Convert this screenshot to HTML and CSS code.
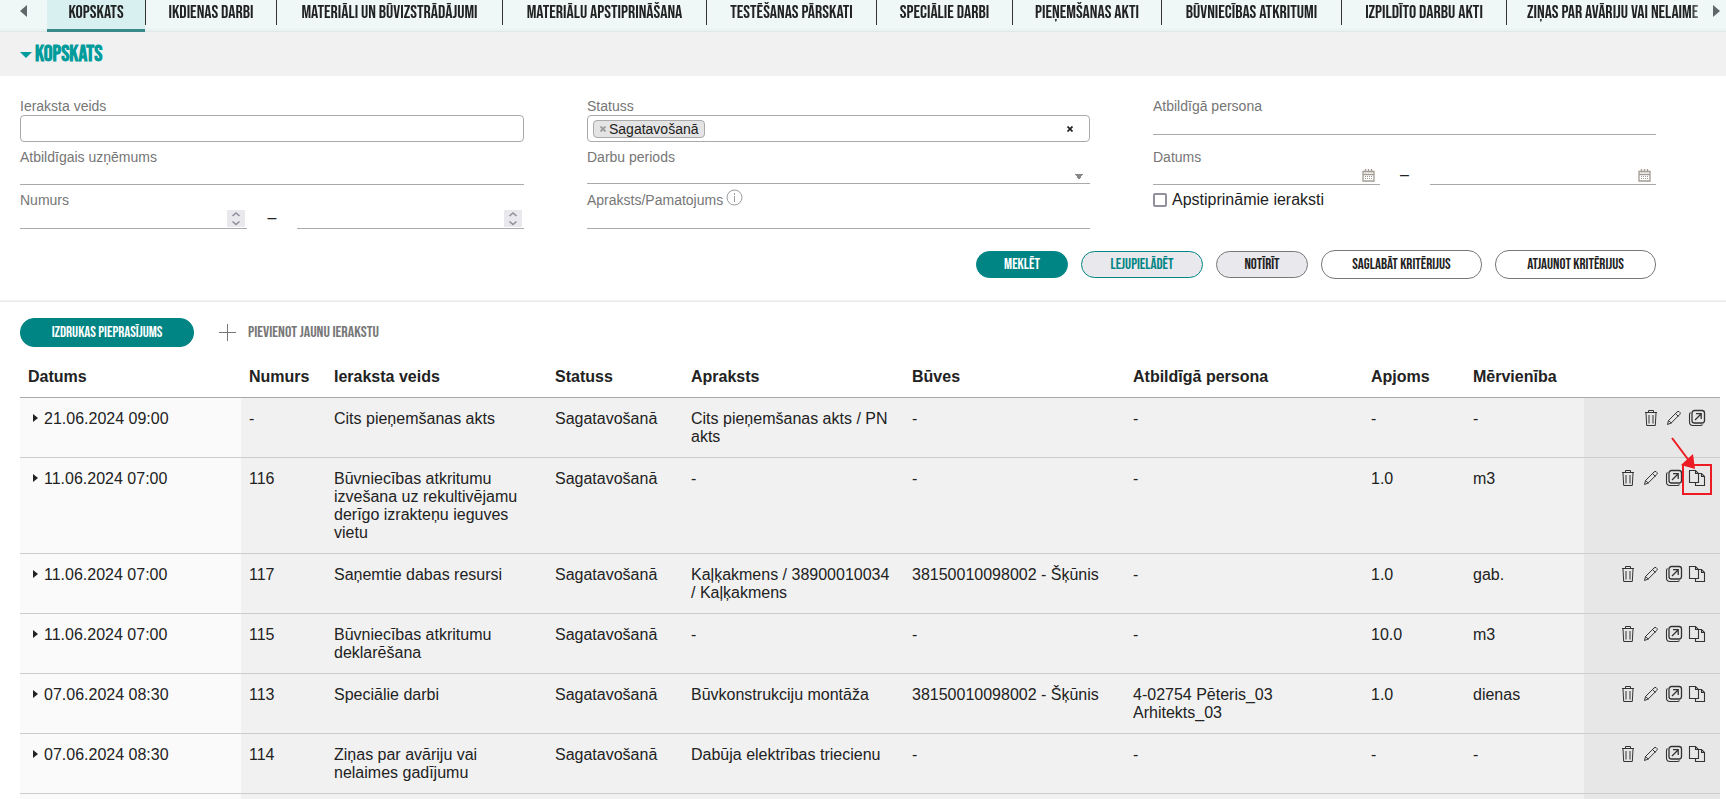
FILE: index.html
```html
<!DOCTYPE html>
<html lang="lv">
<head>
<meta charset="utf-8">
<title>Kopskats</title>
<link rel="stylesheet" href="styles.css">
</head>
<body>
<svg class="sprite" aria-hidden="true">
  <symbol id="trash" viewBox="0 0 18 18"><path d="M3 3.500h12M6.500 3V1.500h5V3M4 4l.7 12.500h8.600L14 4M7 6v8.500M11 6v8.500" fill="none" stroke="currentColor"/></symbol>
  <symbol id="pencil" viewBox="0 0 18 18"><path d="M2.500 15.500l1-4 8.500-8.500q1-1 2-.5l1 1q.7 1-.3 2l-8.500 8.500zM10.500 4.500l3 3M3.500 11.500l3 2.800" fill="none" stroke="currentColor"/></symbol>
  <symbol id="open" viewBox="0 0 18 18"><rect x="4" y="1.500" width="12.500" height="12.500" rx="2.500" fill="none" stroke="currentColor" stroke-width="1.300"/><path d="M2.500 3.500Q1.500 4 1.500 6v7q0 3.500 3.500 3.500h7q2 0 2.500-1" fill="none" stroke="currentColor" stroke-width="1.100"/><path d="M7 11l6-6M8 4.700h5.200V10" fill="none" stroke="currentColor" stroke-width="1.300"/></symbol>
  <symbol id="copy" viewBox="0 0 18 18"><path d="M7.500 13.500h-6v-12h6l3 3v9h-3M7.500 1.500v3h3M10.500 4.500h3l3 3v9h-9v-3M13.500 4.500v3h3" fill="none" stroke="currentColor" stroke-width="1.100"/></symbol>
  <symbol id="calendar" viewBox="0 0 13 13"><path d="M1 2.500h11v9.500H1zM1 5.500h11M3.500 0v3.500M6.500 0v3.500M9.500 0v3.500" fill="none" stroke="currentColor" stroke-width="1.300"/><path d="M3 7.500h7M3 9.500h7" stroke="currentColor" stroke-dasharray="1 1"/></symbol>
  <symbol id="spin" viewBox="0 0 18 17"><path d="M5.500 6L9 3l3.500 3M5.500 11.500l3.500 3 3.500-3" fill="none" stroke="currentColor" stroke-width="1.600"/></symbol>
  <symbol id="expand" viewBox="0 0 5 8"><path d="M0 0l5 4-5 4z" fill="currentColor"/></symbol>
  <symbol id="cross" viewBox="0 0 6 6"><path d="M.5.5l5 5M5.500.5l-5 5" stroke="currentColor" stroke-width="1.700"/></symbol>
</svg>

<nav class="tabs">
  <button class="tabs-arrow" aria-label="Iepriekšējie"><svg width="7" height="12" viewBox="0 0 7 12"><path d="M7 0v12L0 6z" fill="#5f6868"/></svg></button>
  <div class="tabs-list">
    <a class="tab tab-active" href="#">KOPSKATS</a>
    <a class="tab" href="#">IKDIENAS DARBI</a>
    <a class="tab" href="#">MATERIĀLI UN BŪVIZSTRĀDĀJUMI</a>
    <a class="tab" href="#">MATERIĀLU APSTIPRINĀŠANA</a>
    <a class="tab" href="#">TESTĒŠANAS PĀRSKATI</a>
    <a class="tab" href="#">SPECIĀLIE DARBI</a>
    <a class="tab" href="#">PIEŅEMŠANAS AKTI</a>
    <a class="tab" href="#">BŪVNIECĪBAS ATKRITUMI</a>
    <a class="tab" href="#">IZPILDĪTO DARBU AKTI</a>
    <a class="tab tab-last" href="#">ZIŅAS PAR AVĀRIJU VAI NELAIME</a>
  </div>
  <button class="tabs-arrow tabs-next" aria-label="Nākamie"><svg width="7" height="12" viewBox="0 0 7 12"><path d="M0 0v12l7-6z" fill="#5f6868"/></svg></button>
</nav>

<header class="title-bar">
  <svg width="12" height="6" viewBox="0 0 12 6"><path d="M0 0h12L6 6z" fill="#009b9b"/></svg>
  <h1 class="title">KOPSKATS</h1>
</header>

<form class="search">
  <div class="fields">
    <div class="field">
      <label class="label" for="type">Ieraksta veids</label>
      <input class="box" id="type" type="text">
    </div>
    <div class="field">
      <label class="label" for="status">Statuss</label>
      <div class="box multi">
        <span class="chip"><button type="button" class="plain chip-remove" aria-label="Noņemt"><svg width="6" height="6"><use href="#cross"/></svg></button>Sagatavošanā</span>
        <input class="multi-input" id="status" type="text">
        <button type="button" class="plain" aria-label="Notīrīt statusu"><svg width="6" height="6"><use href="#cross"/></svg></button>
      </div>
    </div>
    <div class="field">
      <label class="label" for="person">Atbildīgā persona</label>
      <input class="line tall" id="person" type="text">
    </div>
    <div class="field">
      <label class="label" for="company">Atbildīgais uzņēmums</label>
      <input class="line" id="company" type="text">
    </div>
    <div class="field">
      <label class="label" for="period">Darbu periods</label>
      <select class="line select" id="period"><option></option></select>
    </div>
    <div class="field">
      <label class="label" for="date-from">Datums</label>
      <div class="range">
        <div class="line with-icon"><input class="bare" id="date-from" type="text"><button type="button" class="plain cal" aria-label="Kalendārs"><svg width="13" height="13"><use href="#calendar"/></svg></button></div>
        <span class="dash">–</span>
        <div class="line with-icon"><input class="bare" type="text" aria-label="Datums līdz"><button type="button" class="plain cal" aria-label="Kalendārs"><svg width="13" height="13"><use href="#calendar"/></svg></button></div>
      </div>
    </div>
    <div class="field">
      <label class="label" for="num-from">Numurs</label>
      <div class="range">
        <div class="line with-icon tall"><input class="bare" id="num-from" type="number"><button type="button" class="plain spin" aria-label="Mainīt"><svg width="18" height="17"><use href="#spin"/></svg></button></div>
        <span class="dash">–</span>
        <div class="line with-icon tall"><input class="bare" type="number" aria-label="Numurs līdz"><button type="button" class="plain spin" aria-label="Mainīt"><svg width="18" height="17"><use href="#spin"/></svg></button></div>
      </div>
    </div>
    <div class="field">
      <label class="label" for="desc">Apraksts/Pamatojums <svg class="info" width="17" height="17" viewBox="0 0 17 17"><circle cx="8.500" cy="8.500" r="7.500" fill="none" stroke="#999"/><path d="M8.500 4v2M8.500 7v6" stroke="#999"/></svg></label>
      <input class="line tall" id="desc" type="text">
    </div>
    <div class="field">
      <label class="check"><input class="check-box" type="checkbox">Apstiprināmie ieraksti</label>
    </div>
  </div>
  <div class="actions">
    <button type="button" class="btn btn-primary btn-s">MEKLĒT</button>
    <button type="button" class="btn btn-teal btn-m">LEJUPIELĀDĒT</button>
    <button type="button" class="btn btn-grey btn-s">NOTĪRĪT</button>
    <button type="button" class="btn btn-l">SAGLABĀT KRITĒRIJUS</button>
    <button type="button" class="btn btn-l">ATJAUNOT KRITĒRIJUS</button>
  </div>
</form>

<main class="results">
  <div class="toolbar">
    <button class="btn btn-primary btn-print">IZDRUKAS PIEPRASĪJUMS</button>
    <button class="plain add"><svg width="17" height="17" viewBox="0 0 17 17"><path d="M8.500 0v17M0 8.500h17" stroke="#777"/></svg>PIEVIENOT JAUNU IERAKSTU</button>
  </div>
  <table class="grid">
    <colgroup><col class="w13"><col class="w5"><col class="w13"><col class="w8"><col class="w13"><col class="w13"><col class="w14"><col class="w6"><col class="w7"><col class="w8"></colgroup>
    <thead>
      <tr><th>Datums</th><th>Numurs</th><th>Ieraksta veids</th><th>Statuss</th><th>Apraksts</th><th>Būves</th><th>Atbildīgā persona</th><th>Apjoms</th><th>Mērvienība</th><th></th></tr>
    </thead>
    <tbody>
      <tr><td><svg class="expand" width="5" height="8"><use href="#expand"/></svg>21.06.2024 09:00</td><td>-</td><td>Cits pieņemšanas akts</td><td>Sagatavošanā</td><td>Cits pieņemšanas akts / PN akts</td><td>-</td><td>-</td><td>-</td><td>-</td>
        <td><div class="icons"><button class="plain" aria-label="Dzēst"><svg width="18" height="18"><use href="#trash"/></svg></button><button class="plain" aria-label="Labot"><svg width="18" height="18"><use href="#pencil"/></svg></button><button class="plain" aria-label="Atvērt"><svg width="18" height="18"><use href="#open"/></svg></button></div></td></tr>
      <tr><td><svg class="expand" width="5" height="8"><use href="#expand"/></svg>11.06.2024 07:00</td><td>116</td><td>Būvniecības atkritumu izvešana uz rekultivējamu derīgo izrakteņu ieguves vietu</td><td>Sagatavošanā</td><td>-</td><td>-</td><td>-</td><td>1.0</td><td>m3</td>
        <td><div class="icons"><button class="plain" aria-label="Dzēst"><svg width="18" height="18"><use href="#trash"/></svg></button><button class="plain" aria-label="Labot"><svg width="18" height="18"><use href="#pencil"/></svg></button><button class="plain" aria-label="Atvērt"><svg width="18" height="18"><use href="#open"/></svg></button><button class="plain marked" aria-label="Kopēt"><svg width="18" height="18"><use href="#copy"/></svg><svg class="marker" width="44" height="61" viewBox="0 0 44 61"><rect x="13" y="29" width="28" height="29" fill="none" stroke="#ed1c24" stroke-width="2"/><path d="M2 2l18 24" stroke="#ed1c24" stroke-width="2"/><path d="M23 18L11 29l14 4z" fill="#ed1c24"/></svg></button></div></td></tr>
      <tr><td><svg class="expand" width="5" height="8"><use href="#expand"/></svg>11.06.2024 07:00</td><td>117</td><td>Saņemtie dabas resursi</td><td>Sagatavošanā</td><td>Kaļķakmens / 38900010034 / Kaļķakmens</td><td>38150010098002 - Šķūnis</td><td>-</td><td>1.0</td><td>gab.</td>
        <td><div class="icons"><button class="plain" aria-label="Dzēst"><svg width="18" height="18"><use href="#trash"/></svg></button><button class="plain" aria-label="Labot"><svg width="18" height="18"><use href="#pencil"/></svg></button><button class="plain" aria-label="Atvērt"><svg width="18" height="18"><use href="#open"/></svg></button><button class="plain" aria-label="Kopēt"><svg width="18" height="18"><use href="#copy"/></svg></button></div></td></tr>
      <tr><td><svg class="expand" width="5" height="8"><use href="#expand"/></svg>11.06.2024 07:00</td><td>115</td><td>Būvniecības atkritumu deklarēšana</td><td>Sagatavošanā</td><td>-</td><td>-</td><td>-</td><td>10.0</td><td>m3</td>
        <td><div class="icons"><button class="plain" aria-label="Dzēst"><svg width="18" height="18"><use href="#trash"/></svg></button><button class="plain" aria-label="Labot"><svg width="18" height="18"><use href="#pencil"/></svg></button><button class="plain" aria-label="Atvērt"><svg width="18" height="18"><use href="#open"/></svg></button><button class="plain" aria-label="Kopēt"><svg width="18" height="18"><use href="#copy"/></svg></button></div></td></tr>
      <tr><td><svg class="expand" width="5" height="8"><use href="#expand"/></svg>07.06.2024 08:30</td><td>113</td><td>Speciālie darbi</td><td>Sagatavošanā</td><td>Būvkonstrukciju montāža</td><td>38150010098002 - Šķūnis</td><td>4-02754 Pēteris_03 Arhitekts_03</td><td>1.0</td><td>dienas</td>
        <td><div class="icons"><button class="plain" aria-label="Dzēst"><svg width="18" height="18"><use href="#trash"/></svg></button><button class="plain" aria-label="Labot"><svg width="18" height="18"><use href="#pencil"/></svg></button><button class="plain" aria-label="Atvērt"><svg width="18" height="18"><use href="#open"/></svg></button><button class="plain" aria-label="Kopēt"><svg width="18" height="18"><use href="#copy"/></svg></button></div></td></tr>
      <tr><td><svg class="expand" width="5" height="8"><use href="#expand"/></svg>07.06.2024 08:30</td><td>114</td><td>Ziņas par avāriju vai nelaimes gadījumu</td><td>Sagatavošanā</td><td>Dabūja elektrības triecienu</td><td>-</td><td>-</td><td>-</td><td>-</td>
        <td><div class="icons"><button class="plain" aria-label="Dzēst"><svg width="18" height="18"><use href="#trash"/></svg></button><button class="plain" aria-label="Labot"><svg width="18" height="18"><use href="#pencil"/></svg></button><button class="plain" aria-label="Atvērt"><svg width="18" height="18"><use href="#open"/></svg></button><button class="plain" aria-label="Kopēt"><svg width="18" height="18"><use href="#copy"/></svg></button></div></td></tr>
      <tr><td></td><td></td><td></td><td></td><td></td><td></td><td></td><td></td><td></td><td></td></tr>
    </tbody>
  </table>
</main>
</body>
</html>
```
FILE: styles.css
```css
* { box-sizing: border-box; }
html { height: 100%; overflow: hidden; }
body {
  margin: 0;
  font: 16px/18px "Liberation Sans", Arial, sans-serif;
  color: #222;
  background: #fff;
}
svg { display: block; flex: none; }
.sprite { position: absolute; width: 0; height: 0; }
button, input, select { font: inherit; color: inherit; }
.plain { display: flex; align-items: center; padding: 0; border: 0; background: none; }

/* Tabs */
.tabs {
  display: flex;
  height: 32px;
  background: linear-gradient(#eff7f7 27px, #e8f0f0 31px, #d8e0e0);
}
.tabs-arrow {
  display: flex;
  flex: none;
  width: 47px;
  padding: 5px 0 0 20px;
  border: 0;
  background: none;
}
.tabs-next { width: 16px; padding-left: 3px; }
.tabs-list {
  display: grid;
  flex: 1;
  grid-template-columns: 98px 132px 226px 204px 170px 136px 149px 180px 165px 1fr;
  overflow: hidden;
  -webkit-mask-image: linear-gradient(to left, transparent, #000 20px);
  mask-image: linear-gradient(to left, transparent, #000 20px);
}
.tab {
  height: 25px;
  padding-top: 3px;
  border-right: 1px solid #333;
  font: 18px/20px "Bebas Neue", "Liberation Sans Narrow", "Liberation Sans", sans-serif;
  text-align: center;
  text-decoration: none;
  white-space: nowrap;
  color: #222;
}
.tab-active { height: 32px; border-right: 0; border-bottom: 3px solid #37898a; background: #d8f0f0; }
.tab-active + .tab { border-left: 1px solid #333; }
.tab-last { padding-left: 20px; border-right: 0; text-align: left; }

.title-bar {
  display: flex;
  align-items: center;
  gap: 3px;
  height: 44px;
  padding: 2px 0 0 20px;
  background: #f1f1f1;
}
.title {
  margin: 0;
  font: bold 22px/24px "Bebas Neue", "Liberation Sans Narrow", "Liberation Sans", sans-serif;
  color: #009b9b;
}

/* Search form */
.search {
  padding: 22px 70px 23px 20px;
  background: linear-gradient(to top, #e6e6e6, #fff 3px);
}
.fields { display: grid; grid-template-columns: repeat(3, 1fr); gap: 7px 63px; }
.label { display: flex; gap: 3px; height: 17px; font-size: 14px; line-height: 17px; color: #767676; }
.info { margin-top: -3px; }
.box { display: block; width: 100%; height: 27px; border: 1px solid #aaa; border-radius: 4px; background: #fff; }
.multi { display: flex; align-items: center; padding: 0 16px 0 5px; }
.multi-input { flex: 1; min-width: 0; border: 0; outline: 0; }
.chip {
  display: flex;
  align-items: center;
  gap: 3px;
  height: 18px;
  padding: 0 5px 0 6px;
  border: 1px solid #aaa;
  border-radius: 4px;
  background: #e4e4e4;
  font-size: 14px;
  line-height: 14px;
}
.chip-remove { color: #999; }
.line { display: block; width: 100%; height: 19px; padding: 0; border: 0; border-bottom: 1px solid #aaa; border-radius: 0; background: none; }
.tall { height: 20px; }
.select {
  appearance: none;
  height: 18px;
  background: conic-gradient(from -34deg at 50% 100%, #888 68deg, transparent 0) no-repeat right 7px top 8px / 8px 6px;
}
.range { display: grid; grid-template-columns: 1fr 50px 1fr; align-items: start; text-align: center; }
.dash { line-height: 18px; }
.with-icon { display: flex; }
.bare { flex: 1; min-width: 0; padding: 0; border: 0; background: none; appearance: textfield; }
.bare::-webkit-inner-spin-button { display: none; }
.cal { margin-right: 5px; color: #a39c94; }
.spin { width: 18px; height: 17px; margin: 1px 2px 0 0; background: #e9e9ed; color: #8f8f9d; }
.check { display: flex; align-items: center; gap: 5px; height: 16px; line-height: 16px; }
.check-box { appearance: none; width: 14px; height: 14px; margin: 0; border: 2px solid #8f8f9d; border-radius: 2px; background: #fff; }

.actions { display: flex; align-items: center; justify-content: flex-end; gap: 13px; padding-top: 21px; }
.btn {
  height: 29px;
  padding: 0;
  border: 1px solid #777;
  border-radius: 14px;
  background: #fff;
  font: 15px/18px "Bebas Neue", "Liberation Sans Narrow", "Liberation Sans", sans-serif;
  color: #222;
}
.btn-s { width: 92px; height: 27px; }
.btn-m { width: 122px; height: 27px; }
.btn-l { width: 161px; }
.btn-print { width: 174px; }
.btn-grey { background: #e9e9ed; }
.btn-teal { border-color: #008484; background: #e9e9ed; color: #008484; }
.btn-primary { border-color: #008484; background: #008484; color: #fff; }

/* Results */
.results { padding: 16px 6px 0 20px; }
.toolbar { display: flex; gap: 25px; }
.add {
  gap: 12px;
  font: 16px/18px "Bebas Neue", "Liberation Sans Narrow", "Liberation Sans", sans-serif;
  color: #777;
}
.grid { width: 100%; table-layout: fixed; border-collapse: separate; border-spacing: 0; }
.w5 { width: 5%; }
.w6 { width: 6%; }
.w7 { width: 7%; }
.w8 { width: 8%; }
.w13 { width: 13%; }
.w14 { width: 14%; }
.grid th { padding: 21px 8px 11px; border-bottom: 1px solid #aaa; text-align: left; }
.grid td { padding: 12px 8px 11px; border-bottom: 1px solid #ccc; background: #f1f1f1; vertical-align: top; }
.grid td:first-child { background: #fafafa; }
.grid td:last-child { padding-top: 11px; padding-right: 14px; background: #e7e7e7; }
.expand { display: inline-block; margin: 0 6px 2px 5px; }
.icons { display: flex; justify-content: flex-end; gap: 5px; color: #333; }
.marked { position: relative; }
.marker { position: absolute; left: -18px; top: -33px; }
```
